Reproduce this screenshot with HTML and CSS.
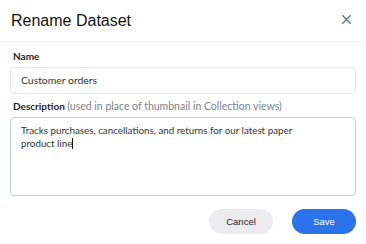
FILE: index.html
```html
<!DOCTYPE html>
<html>
<head>
<meta charset="utf-8">
<link rel="stylesheet" href="styles.css">
</head>
<body>
<div class="dialog">
  <div class="header">
    <h1 class="title">Rename Dataset</h1>
    <button class="close" aria-label="Close">
      <svg width="9" height="9" viewBox="0 0 9 9"><path d="M0.8 0.8L8.2 8.2M8.2 0.8L0.8 8.2" stroke="#6b7280" stroke-width="1.5" stroke-linecap="round"/></svg>
    </button>
  </div>
  <div class="body">
    <label class="label">Name</label>
    <div class="input">Customer orders</div>
    <label class="label desc-label">Description <span class="hint">(used in place of thumbnail in Collection views)</span></label>
    <div class="textarea">Tracks purchases, cancellations, and returns for our latest paper product line<span class="caret"></span></div>
    <div class="actions">
      <button class="btn cancel">Cancel</button>
      <button class="btn save">Save</button>
    </div>
  </div>
</div>
</body>
</html>
```
FILE: styles.css
```css
html, body {
  margin: 0;
  padding: 0;
  background: #ffffff;
}
.dialog {
  width: 366px;
  height: 244px;
  font-family: "Lato", "Liberation Sans", sans-serif;
  color: #1f2328;
}
.header {
  height: 41px;
  border-bottom: 1px solid #f1f1f3;
  display: flex;
  align-items: center;
  justify-content: space-between;
  padding: 0 15px 0 11px;
}
.title {
  margin: 0;
  font-family: "Liberation Sans", Arial, sans-serif;
  font-weight: 400;
  font-size: 16px;
  color: #111;
  padding-top: 1px;
}
.close {
  border: 0;
  background: none;
  padding: 0;
  width: 9px;
  height: 9px;
  display: flex;
  margin-top: -2px;
}
.body {
  padding: 7px 10px 0 10px;
  display: flex;
  flex-direction: column;
}
.label {
  font-size: 10px;
  font-weight: 700;
  color: #1f2328;
  padding-left: 3px;
  line-height: 14px;
}
.hint {
  font-weight: 400;
  font-size: 10.5px;
  color: #7b7f88;
}
.input {
  margin-top: 4px;
  height: 27px;
  box-sizing: border-box;
  border: 1px solid #e8e9ec;
  border-radius: 4px;
  font-size: 10.4px;
  line-height: 25px;
  padding-left: 10px;
  color: #333;
}
.desc-label {
  margin-top: 5px;
}
.textarea {
  margin-top: 4px;
  height: 79px;
  box-sizing: border-box;
  border: 1px solid #b7cef5;
  border-radius: 4px;
  font-size: 9.8px;
  line-height: 12.5px;
  padding: 6px 36px 6px 10px;
  color: #333;
}
.caret {
  display: inline-block;
  width: 1px;
  height: 11px;
  background: #111;
  vertical-align: -2px;
}
.actions {
  margin-top: 13px;
  display: flex;
  justify-content: flex-end;
  gap: 19px;
}
.btn {
  width: 64px;
  height: 25px;
  border: 0;
  border-radius: 13px;
  font-family: "Liberation Sans", Arial, sans-serif;
  font-size: 9.5px;
  padding: 0;
}
.cancel {
  background: #ececef;
  color: #1f2328;
}
.save {
  background: #2b73ea;
  color: #fff;
}
```
